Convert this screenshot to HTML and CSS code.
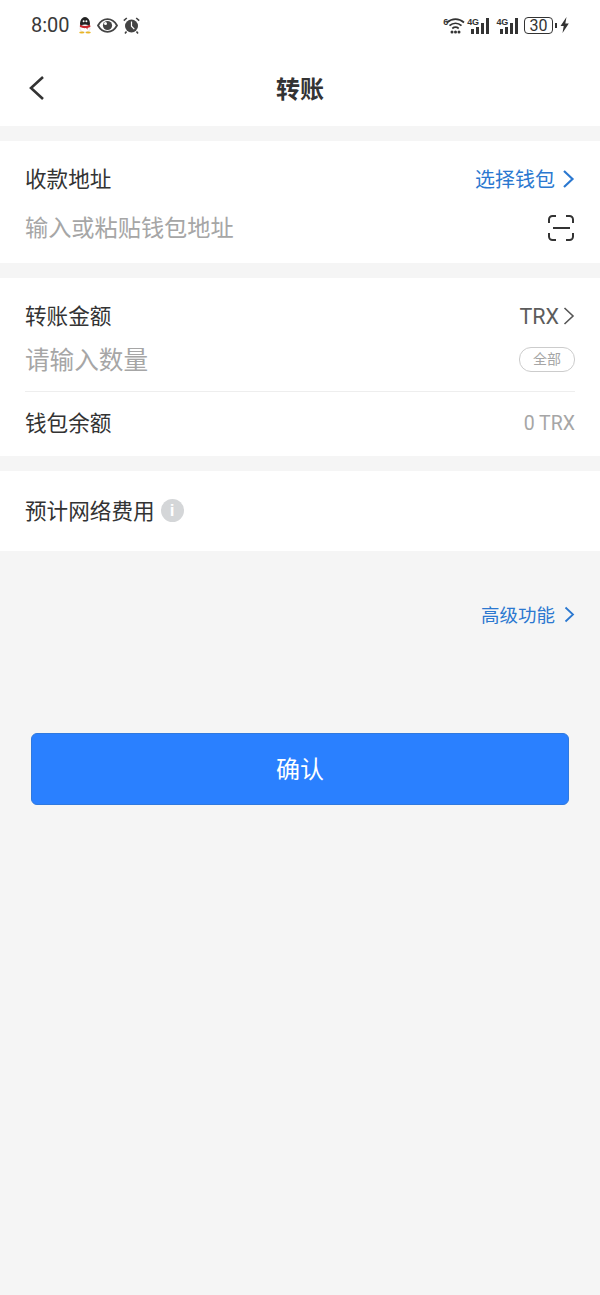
FILE: index.html
```html
<!DOCTYPE html>
<html lang="zh-CN">

<head>
    <meta charset="UTF-8">
    <meta name="viewport" content="width=device-width, initial-scale=1.0">
    <title>转账</title>
    <link rel="stylesheet" href="styles.css">
</head>

<body>
    <header class="top">
        <div class="status">
            <div class="status-left">
                <span class="clock">8:00</span>
                <!-- qq -->
                <svg width="14" height="17" viewBox="0 0 14 17">
                    <ellipse cx="7" cy="6.500" rx="5" ry="6.500" fill="#222" />
                    <ellipse cx="7" cy="11.500" rx="5" ry="3.800" fill="#fff" stroke="#ccc" stroke-width=".5" />
                    <path d="M2 7.800c3.200 1.600 6.800 1.600 10 0l.5 1.900c-1 .6-2 1-3.100 1.200l.5 1.900-1.900-1.700c-2.500.2-4.500-.3-6.200-1.400z" fill="#c9262c" />
                    <ellipse cx="3.800" cy="15.600" rx="2.600" ry="1" fill="#e9b526" />
                    <ellipse cx="10.200" cy="15.600" rx="2.600" ry="1" fill="#e9b526" />
                    <circle cx="5.600" cy="4.200" r="1" fill="#fff" />
                    <circle cx="8.400" cy="4.200" r="1" fill="#fff" />
                </svg>
                <!-- eye -->
                <svg width="21" height="15" viewBox="0 0 21 15">
                    <path d="M1 7.500C3.400 3.200 6.700 1.200 10.500 1.200s7.100 2 9.500 6.300c-2.400 4.300-5.700 6.300-9.500 6.300S3.400 11.800 1 7.500z" fill="none" stroke="#444" stroke-width="1.800" />
                    <circle cx="10.500" cy="7.500" r="4.600" fill="#444" />
                    <circle cx="8.500" cy="5.600" r="1.500" fill="#fff" />
                </svg>
                <!-- alarm -->
                <svg width="17" height="17" viewBox="0 0 17 17">
                    <circle cx="8.500" cy="9" r="6.500" fill="#444" />
                    <path d="M8.500 4.500v4.700l2.800 3" fill="none" stroke="#fff" stroke-width="1.200" />
                    <path d="M.8 3.600L3.800 1M16.200 3.600L13.200 1M3.500 14.500L2 16.500M13.500 14.500l1.500 2" fill="none" stroke="#444" stroke-width="1.600" />
                </svg>
            </div>
            <div class="status-right">
                <!-- wifi with the small 6 -->
                <span class="wifi">
                    <span class="tiny six">6</span>
                    <svg width="19" height="17" viewBox="0 0 19 17">
                        <g fill="none" stroke="#333" stroke-width="1.700">
                            <path d="M1 5.500c5-4.600 12-4.600 17 0" />
                            <path d="M3.500 8.700c3.600-3.200 8.400-3.200 12 0" />
                            <path d="M6.300 11.500c2-1.600 4.400-1.600 6.400 0" />
                        </g>
                        <g fill="#333">
                            <circle cx="6" cy="15" r="1.500" />
                            <circle cx="9.500" cy="15" r="1.500" />
                            <circle cx="13" cy="15" r="1.500" />
                        </g>
                    </svg>
                </span>
                <span class="signal">
                    <span class="tiny">4G</span>
                    <svg width="21" height="17" viewBox="0 0 21 17">
                        <g fill="#333">
                            <rect x="1" y="12" width="3" height="5" />
                            <rect x="6" y="10" width="3" height="7" />
                            <rect x="11" y="6" width="3" height="11" />
                            <rect x="16" y="1" width="3" height="16" />
                        </g>
                    </svg>
                </span>
                <span class="signal">
                    <span class="tiny">4G</span>
                    <svg width="21" height="17" viewBox="0 0 21 17">
                        <g fill="#333">
                            <rect x="1" y="12" width="3" height="5" />
                            <rect x="6" y="10" width="3" height="7" />
                            <rect x="11" y="6" width="3" height="11" />
                            <rect x="16" y="1" width="3" height="16" />
                        </g>
                    </svg>
                </span>
                <span class="battery">30</span>
                <span class="battery-tip"></span>
                <svg width="9" height="16" viewBox="0 0 9 16">
                    <path d="M6.500 0L0.500 9h3.200L2.500 16 8.800 6.500H5.300z" fill="#333" />
                </svg>
            </div>
        </div>
        <div class="nav">
            <svg class="back" width="18" height="28" viewBox="0 0 18 28">
                <path d="M15 3L3 14l12 11" fill="none" stroke="#333" stroke-width="2.600" />
            </svg>
            <h1>转账</h1>
        </div>
    </header>

    <section class="card card-address">
        <div class="row row-label">
            <span class="label">收款地址</span>
            <a class="link link-wallet">选择钱包
                <svg width="13" height="20" viewBox="0 0 13 20">
                    <path d="M2 2l8.500 8L2 18" fill="none" stroke="#2b78d0" stroke-width="2.200" />
                </svg>
            </a>
        </div>
        <div class="row row-input">
            <span class="placeholder">输入或粘贴钱包地址</span>
            <svg width="28" height="28" viewBox="0 0 28 28">
                <path d="M2 9V5.500A3.500 3.500 0 0 1 5.500 2H9M19 2h3.500A3.500 3.500 0 0 1 26 5.500V9M26 19v3.500a3.500 3.500 0 0 1-3.500 3.500H19M9 26H5.500A3.500 3.500 0 0 1 2 22.500V19M6 14h17" fill="none" stroke="#333" stroke-width="2" />
            </svg>
        </div>
    </section>

    <section class="card card-amount">
        <div class="row row-label">
            <span class="label">转账金额</span>
            <span class="coin">TRX
                <svg width="12" height="20" viewBox="0 0 12 20">
                    <path d="M1.500 2l8.500 8-8.500 8" fill="none" stroke="#555" stroke-width="1.600" />
                </svg>
            </span>
        </div>
        <div class="row row-qty">
            <span class="placeholder placeholder-big">请输入数量</span>
            <span class="pill">全部</span>
        </div>
        <div class="row row-balance">
            <span class="label">钱包余额</span>
            <span class="balance">0 TRX</span>
        </div>
    </section>

    <section class="card card-fee">
        <span class="label">预计网络费用</span>
        <span class="info">i</span>
    </section>

    <div class="advanced">
        <a class="link link-adv">高级功能
            <svg width="11" height="17" viewBox="0 0 11 17">
                <path d="M1.500 1.500l7.500 7-7.500 7" fill="none" stroke="#2b78d0" stroke-width="1.800" />
            </svg>
        </a>
    </div>

    <button class="confirm" type="button">确认</button>
</body>

</html>
```

FILE: styles.css
```css
body {
    margin: 0;
    min-height: 1295px;
    background-color: #f5f5f5;
    font-family: "Liberation Sans", "Noto Sans CJK SC", sans-serif;
    color: #333;
}

svg {
    display: block;
    flex: none;
}

.top {
    height: 126px;
    background-color: #fff;
}

.status {
    height: 50px;
    padding: 0 31px;
    display: flex;
    justify-content: space-between;
    align-items: center;
}

.status-left,
.status-right {
    display: flex;
    align-items: center;
}

.status-left {
    gap: 5px;
}

.clock {
    font-family: Roboto, sans-serif;
    font-size: 20px;
    margin-right: 3px;
    color: #3a3a3a;
}

.wifi,
.signal {
    display: flex;
    align-items: flex-start;
    margin-right: 4px;
}

.wifi {
    margin-right: 0;
}

.tiny {
    font-size: 9px;
    font-weight: bold;
    line-height: 10px;
    color: #333;
}

.six {
    margin-right: -2px;
}

.signal .tiny {
    margin: 0 -9px 0 2px;
    letter-spacing: -.3px;
}

.battery {
    width: 27px;
    height: 15px;
    border: 1.500px solid #333;
    border-radius: 4px;
    font-family: Roboto, sans-serif;
    font-size: 16px;
    line-height: 15px;
    text-align: center;
}

.battery-tip {
    width: 2px;
    height: 5px;
    margin: 0 3px 0 2px;
    background-color: #333;
}

.nav {
    height: 76px;
    position: relative;
    display: flex;
    align-items: center;
    justify-content: center;
}

.nav h1 {
    margin: 4px 0 0;
    font-size: 24px;
    line-height: 30px;
    font-weight: bold;
    color: #333;
}

.back {
    position: absolute;
    left: 28px;
    top: 24px;
}

.card {
    background-color: #fff;
    padding: 0 25px;
}

.card-address {
    margin-top: 15px;
    height: 122px;
}

.card-amount {
    margin-top: 15px;
    height: 178px;
}

.card-fee {
    margin-top: 15px;
    height: 80px;
    display: flex;
    align-items: center;
    gap: 6px;
}

.row {
    display: flex;
    justify-content: space-between;
    align-items: center;
}

.label {
    font-size: 21.600px;
    margin-bottom: 4px;
    color: #333;
}

.link {
    display: flex;
    align-items: center;
    color: #2b78d0;
}

.link-wallet {
    font-size: 20px;
    gap: 7px;
    padding-top: 2px;
    line-height: 24px;
}

.link-wallet svg {
    margin-top: -2px;
}

.link-adv {
    font-size: 18.500px;
    gap: 9px;
}

.card-address .row-label {
    height: 76px;
}

.row-input {
    height: 22px;
}

.placeholder {
    font-size: 23.200px;
    margin-bottom: 4px;
    color: #a6a6a6;
}

.placeholder-big {
    font-size: 24.600px;
}

.card-amount .row-label {
    height: 76px;
}

.coin {
    display: flex;
    align-items: center;
    gap: 4px;
    font-family: Roboto, sans-serif;
    font-size: 21.500px;
    color: #5c5c5c;
}

.row-qty {
    height: 37px;
    margin-top: -13px;
}

.pill {
    width: 54px;
    height: 23px;
    border: 1px solid #ccc;
    border-radius: 12px;
    font-size: 14px;
    line-height: 23px;
    text-align: center;
    color: #a6a6a6;
}

.row-balance {
    margin-top: 13px;
    height: 62px;
    border-top: 1px solid #eee;
}

.balance {
    font-family: Roboto, "Noto Sans CJK SC", sans-serif;
    font-size: 19.500px;
    color: #a6a6a6;
}

.info {
    width: 23px;
    height: 23px;
    margin-bottom: 1px;
    border-radius: 50%;
    background-color: #d4d6d8;
    color: #fff;
    font-size: 17px;
    font-weight: bold;
    line-height: 23px;
    text-align: center;
}

.advanced {
    display: flex;
    justify-content: flex-end;
    padding: 49px 25px 0 0;
    height: 182px;
    box-sizing: border-box;
}

.advanced .link {
    height: 28px;
}

.confirm {
    display: block;
    width: 538px;
    height: 72px;
    margin: 0 auto;
    padding: 0 0 4px;
    border: 1px solid #2f79df;
    border-radius: 6px;
    background-color: #2a80ff;
    color: #fff;
    font-family: "Noto Sans CJK SC", sans-serif;
    font-size: 24px;
}
```
